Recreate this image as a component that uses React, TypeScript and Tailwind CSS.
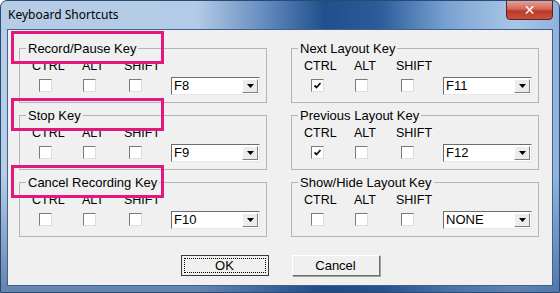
import React from "react";

/* -------------------- DATA -------------------- */

type Group = { title: string; ctrl: boolean; key: string; mark?: boolean };

const LEFT_GROUPS: Group[] = [
  { title: "Record/Pause Key", ctrl: false, key: "F8", mark: true },
  { title: "Stop Key", ctrl: false, key: "F9", mark: true },
  { title: "Cancel Recording Key", ctrl: false, key: "F10", mark: true },
];

const RIGHT_GROUPS: Group[] = [
  { title: "Next Layout Key", ctrl: true, key: "F11" },
  { title: "Previous Layout Key", ctrl: true, key: "F12" },
  { title: "Show/Hide Layout Key", ctrl: false, key: "NONE" },
];

/* -------------------- PIECES -------------------- */

const CheckBox = ({ checked }: { checked: boolean }) => (
  <div className="flex h-[13px] w-[13px] items-center justify-center border border-t-[#7a7a7a] border-l-[#7a7a7a] border-b-[#dedede] border-r-[#dedede] bg-white">
    {checked && (
      <svg width="9" height="9" viewBox="0 0 9 9">
        <path d="M1.5 4.5 L3.5 6.5 L7.5 2" fill="none" stroke="#111" strokeWidth="1.8" />
      </svg>
    )}
  </div>
);

const Combo = ({ value }: { value: string }) => (
  <div className="flex h-[18px] w-[89px] items-stretch border border-t-[#6d6d6d] border-l-[#6d6d6d] border-b-[#e8e8e8] border-r-[#e8e8e8] bg-white">
    <span className="flex-1 pl-[2px] text-[13px] leading-[16px] text-black">{value}</span>
    <div className="m-px flex w-[16px] items-center justify-center border border-t-white border-l-white border-b-[#808080] border-r-[#808080] bg-[#ececec]">
      <svg width="7" height="4" viewBox="0 0 7 4">
        <path d="M0 0 H7 L3.5 4 Z" fill="#000" />
      </svg>
    </div>
  </div>
);

const KeyGroup = ({ group }: { group: Group }) => (
  <fieldset className="w-[248px] border border-[#b4b4b4] pb-[7px]">
    <legend className="relative ml-[6px] px-[2px] text-[13px] leading-[15px] text-black">
      {group.title}
      {group.mark && (
        <span className="absolute -top-[10px] -left-[15px] h-[33px] w-[153px] border-[3px] border-[#e4177c]" />
      )}
    </legend>
    <div className="flex items-start pl-[12px] pt-[3px] text-[12.5px] leading-[14px] text-black">
      <div className="flex w-[50px] flex-col">
        <span>CTRL</span>
        <div className="ml-[7px] mt-[6px]">
          <CheckBox checked={group.ctrl} />
        </div>
      </div>
      <div className="flex w-[42px] flex-col">
        <span>ALT</span>
        <div className="ml-[1px] mt-[6px]">
          <CheckBox checked={false} />
        </div>
      </div>
      <div className="flex w-[47px] flex-col">
        <span>SHIFT</span>
        <div className="ml-[5px] mt-[6px]">
          <CheckBox checked={false} />
        </div>
      </div>
      <div className="mt-[18px]">
        <Combo value={group.key} />
      </div>
    </div>
  </fieldset>
);

/* -------------------- APP -------------------- */

export default function App() {
  return (
    <div
      className="flex h-[293px] w-[560px] flex-col overflow-hidden rounded-t-[7px] border border-[#2a4a73] bg-[linear-gradient(180deg,rgba(0,0,0,0)_0%,rgba(0,0,0,0)_60%,rgba(30,70,130,0.55)_100%),linear-gradient(90deg,#b7cde6_0%,#b3cbe6_35%,#5f88bb_48%,#1f4f8c_58%,#2c5d9a_68%,#7aa3d2_80%,#a9c6e6_92%,#8fb2dc_100%)]"
      style={{ fontFamily: '"Liberation Sans", Arial, sans-serif' }}
    >
      {/* Title bar */}
      <div className="flex h-[28px] shrink-0 items-start justify-between">
        <span
          className="pl-[7px] pt-[6px] text-[12px] leading-[16px] text-black"
          style={{ fontFamily: '"Noto Sans", sans-serif' }}
        >
          Keyboard Shortcuts
        </span>
        <div className="mr-[6px] -mt-px flex h-[20px] w-[47px] items-center justify-center rounded-b-[4px] border border-[#5a2220] bg-[linear-gradient(180deg,#e6a191_0%,#d2685a_45%,#b83a27_55%,#c9523c_100%)]">
          <span className="text-[14px] font-bold leading-none text-white" style={{ fontFamily: '"DejaVu Sans", sans-serif' }}>
            ✕
          </span>
        </div>
      </div>

      {/* Client area */}
      <div className="mx-[6px] flex h-[257px] flex-col border border-[#3d628f] bg-[#f0f0f0] px-[11px] pt-[11px]">
        <div className="flex gap-[24px]">
          {[LEFT_GROUPS, RIGHT_GROUPS].map((col, i) => (
            <div key={i} className="flex flex-col gap-[5px]">
              {col.map((g) => (
                <KeyGroup key={g.title} group={g} />
              ))}
            </div>
          ))}
        </div>

        <div className="mt-[18px] flex justify-center gap-[23px] text-[13px] text-black">
          <button className="h-[21px] w-[88px] border border-[#3a3a3a] bg-[#f0f0f0] p-[2px]">
            <div className="flex h-full items-center justify-center border border-dotted border-black leading-none">
              OK
            </div>
          </button>
          <button className="flex h-[21px] w-[88px] items-center justify-center border border-t-white border-l-white border-b-[#707070] border-r-[#707070] bg-[#f0f0f0] leading-none shadow-[1px_1px_0_#a0a0a0]">
            Cancel
          </button>
        </div>
      </div>
    </div>
  );
}
